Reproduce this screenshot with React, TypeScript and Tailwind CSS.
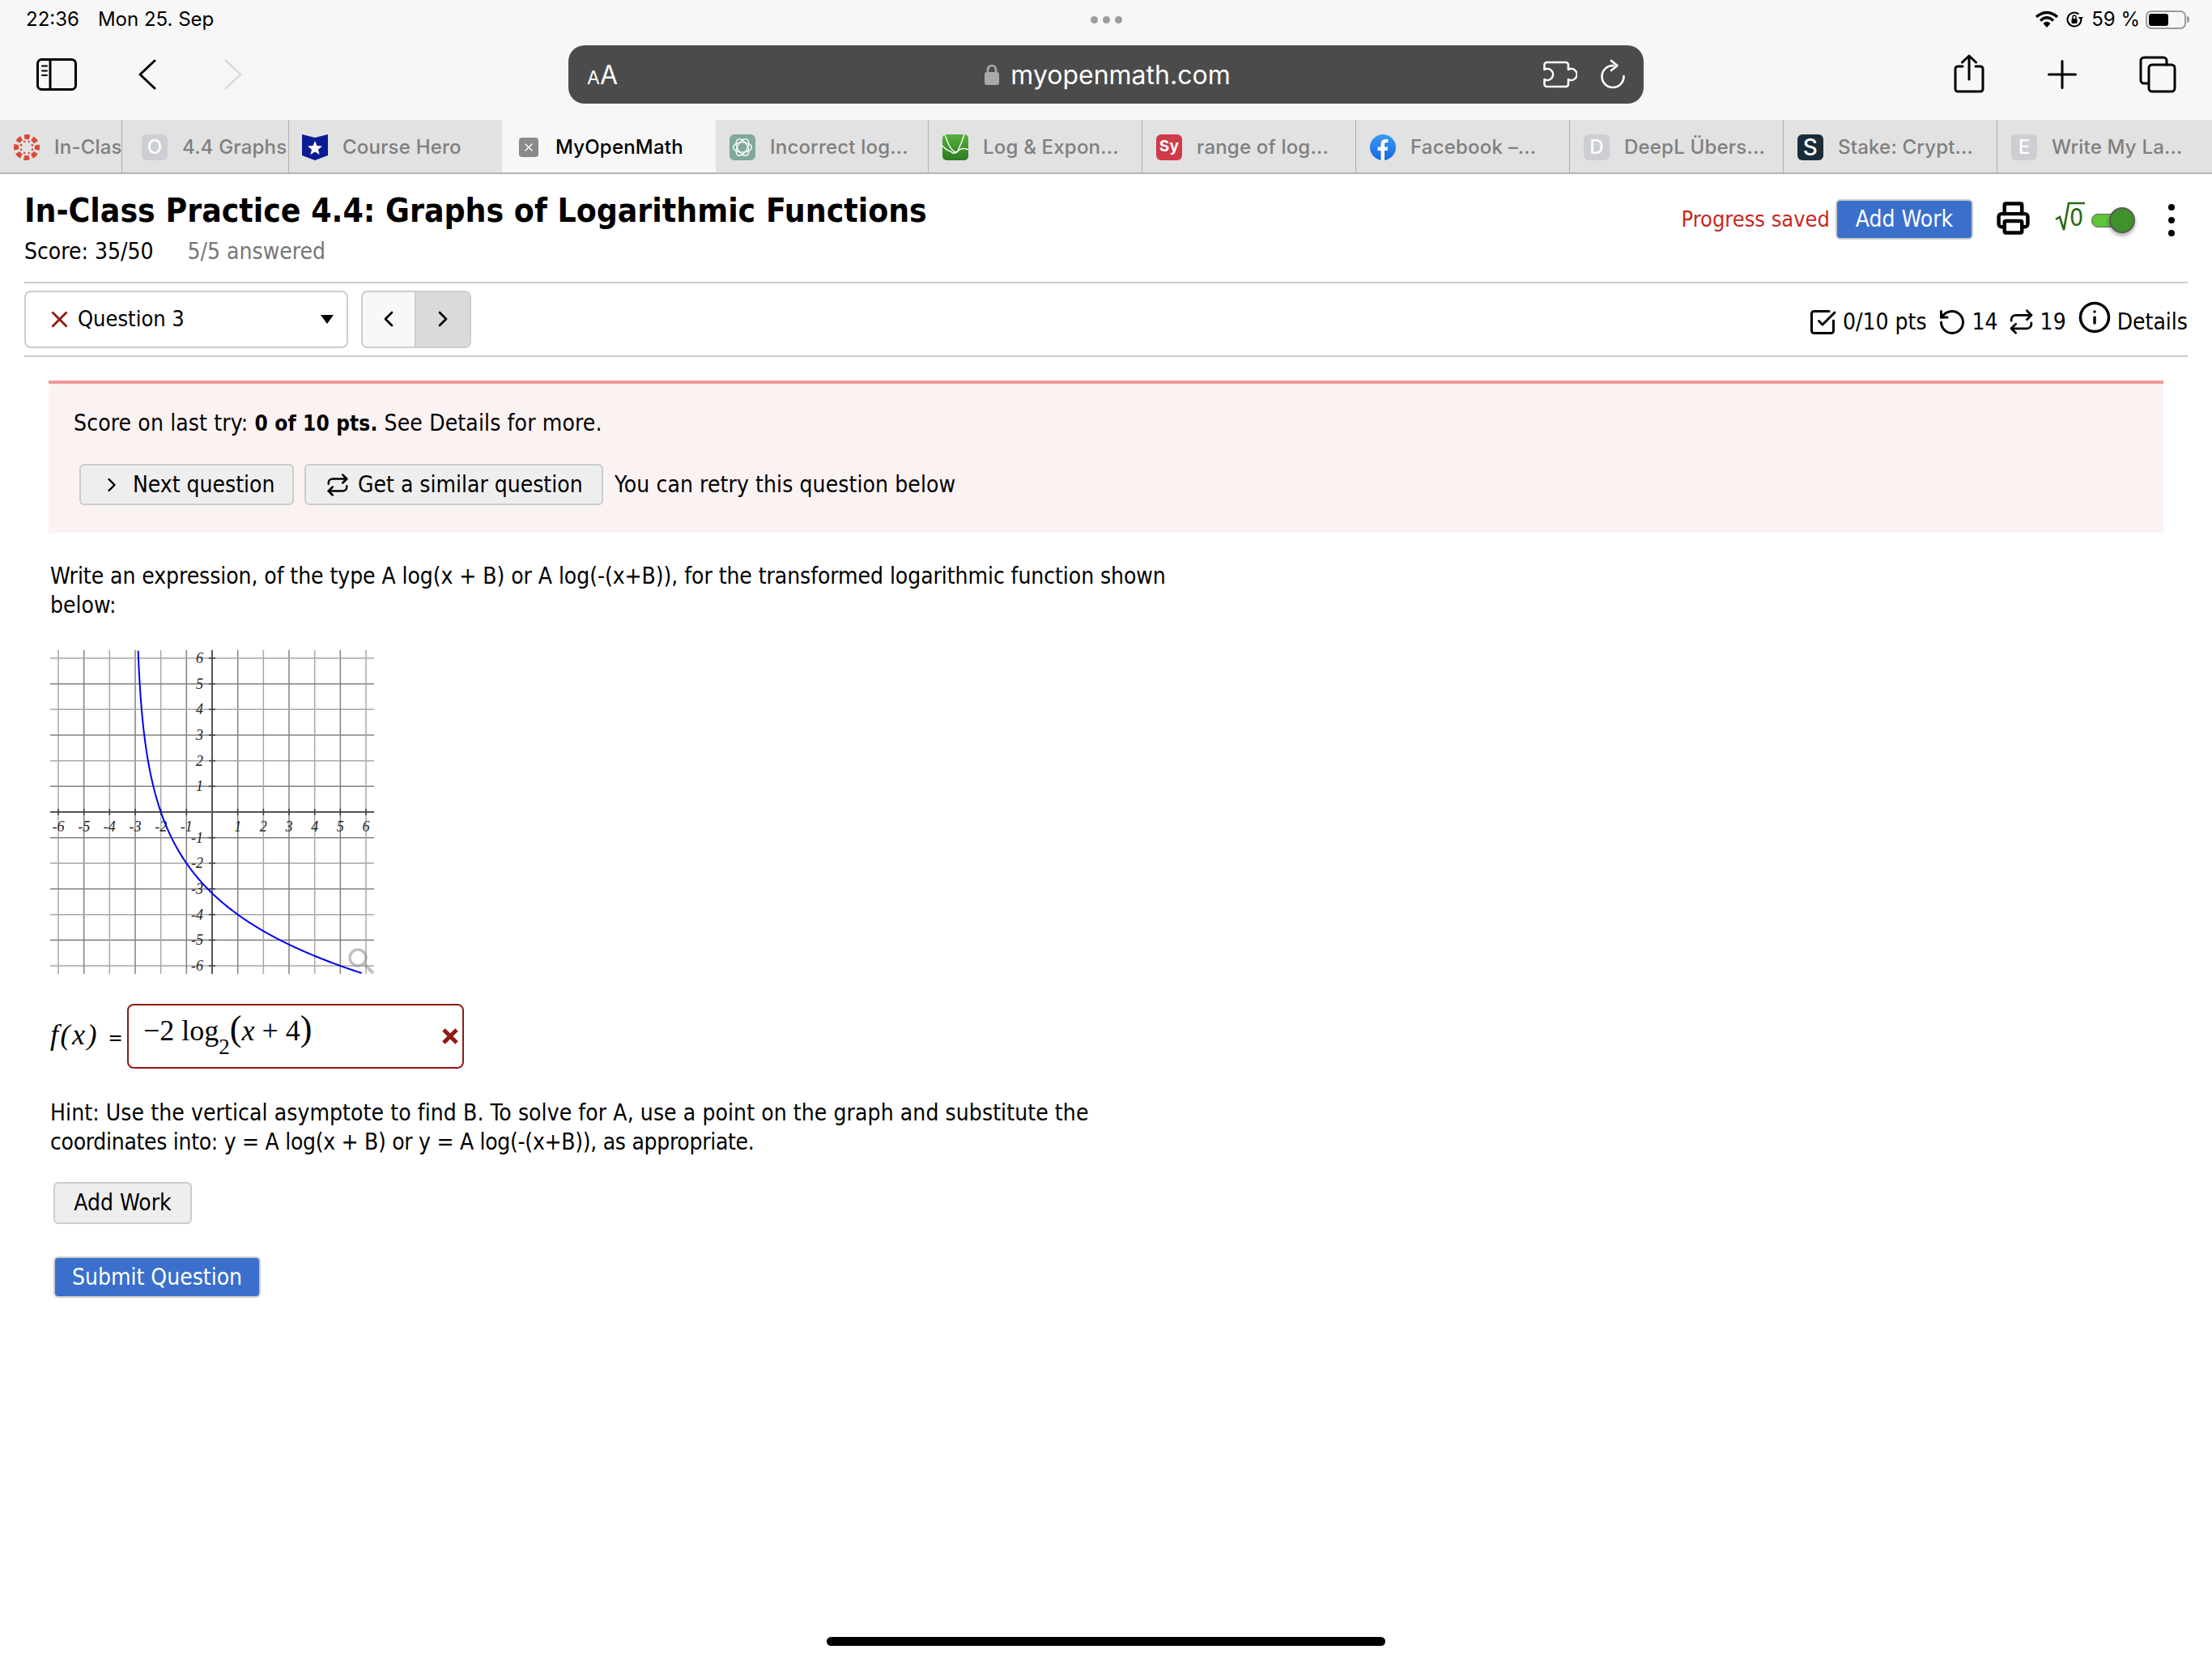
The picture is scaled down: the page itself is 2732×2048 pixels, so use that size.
import React from "react";
import { Printer, X, ChevronLeft, ChevronRight, Repeat, RotateCcw, SquareCheckBig, Info } from "lucide-react";

const sf = "font-['Inter','Liberation_Sans',sans-serif]";

function Tile({ bg, children, size = "w-8 h-8" }: { bg: string; children: React.ReactNode; size?: string }) {
  return <div className={`${size} rounded-[6px] flex items-center justify-center text-white font-medium text-[24px] shrink-0 ${bg}`}>{children}</div>;
}

function CanvasIcon() {
  const dots = Array.from({ length: 8 }, (_, i) => (i * Math.PI) / 4 + Math.PI / 8);
  return (
    <svg viewBox="0 0 32 32" className="w-8 h-8 shrink-0">
      <circle cx="16" cy="16" r="13" fill="none" stroke="#d94b3a" strokeWidth="6" strokeDasharray="6.6 3.6" strokeDashoffset="3.3" />
      {dots.map((a, i) => (
        <circle key={"b" + i} cx={16 + 7.5 * Math.cos(a)} cy={16 + 7.5 * Math.sin(a)} r="1.3" fill="#d94b3a" />
      ))}
    </svg>
  );
}
function HeroIcon() {
  return (
    <svg viewBox="0 0 32 32" className="w-8 h-8 shrink-0">
      <path d="M0 0 L16 4 L32 0 V26 L16 32 L0 26 Z" fill="#0a1c94" />
      <path d="M16 8 L18.5 14 L25 14.5 L20 18.7 L21.6 25 L16 21.6 L10.4 25 L12 18.7 L7 14.5 L13.5 14 Z" fill="#fff" />
    </svg>
  );
}
function GptIcon() {
  return (
    <Tile bg="bg-[#7fa99b]">
      <svg viewBox="0 0 32 32" className="w-7 h-7" fill="none" stroke="#fff" strokeWidth="1.5">
        {[0, 60, 120].map((r) => (
          <ellipse key={r} cx="16" cy="16" rx="13" ry="7" transform={`rotate(${r} 16 16)`} />
        ))}
      </svg>
    </Tile>
  );
}
function DesmosIcon() {
  return (
    <svg viewBox="0 0 32 32" className="w-8 h-8 shrink-0">
      <defs>
        <linearGradient id="dg" x1="0" y1="0" x2="0" y2="1">
          <stop offset="0" stopColor="#55b03c" />
          <stop offset="1" stopColor="#2e7a22" />
        </linearGradient>
      </defs>
      <rect width="32" height="32" rx="5" fill="url(#dg)" />
      <path d="M3 0 Q8 16 13 20 Q17 24 19 20 Q24 10 27 0" fill="none" stroke="#fff" strokeWidth="1.4" />
      <path d="M0 14 Q5 20 10 21 Q14 25 18 22 Q23 15 32 19" fill="none" stroke="#fff" strokeWidth="1.4" />
    </svg>
  );
}
function FbIcon() {
  return (
    <div className="w-8 h-8 shrink-0 rounded-full bg-gradient-to-b from-[#3b9bf5] to-[#1a66e0] flex items-end justify-center overflow-hidden">
      <svg viewBox="0 0 32 32" className="w-8 h-8"><path d="M13.5 32 V20 H9.5 V15.5 H13.5 V12 C13.5 8 16 6 19.4 6 C21 6 22.4 6.2 22.4 6.2 V10 H20.5 C18.6 10 18 11.2 18 12.4 V15.5 H22.2 L21.5 20 H18 V32 Z" fill="#fff" /></svg>
    </div>
  );
}

const tabs: { w: string; label: string; pl: string; icon: React.ReactNode }[] = [
  { w: "w-[151px]", pl: "pl-[17px]", label: "In-Clas", icon: <CanvasIcon /> },
  { w: "w-[206px]", pl: "pl-[24px]", label: "4.4 Graphs", icon: <Tile bg="bg-[#cdced3]">O</Tile> },
  { w: "w-[263px]", pl: "pl-[16px]", label: "Course Hero", icon: <HeroIcon /> },
  { w: "w-[264px]", pl: "pl-[21px]", label: "MyOpenMath", icon: null },
  { w: "w-[263px]", pl: "pl-[17px]", label: "Incorrect log...", icon: <GptIcon /> },
  { w: "w-[264px]", pl: "pl-[17px]", label: "Log & Expon...", icon: <DesmosIcon /> },
  { w: "w-[264px]", pl: "pl-[17px]", label: "range of log...", icon: <Tile bg="bg-[#d03a4a]"><span className="text-[19px] font-bold">Sy</span></Tile> },
  { w: "w-[264px]", pl: "pl-[17px]", label: "Facebook –...", icon: <FbIcon /> },
  { w: "w-[264px]", pl: "pl-[17px]", label: "DeepL Übers...", icon: <Tile bg="bg-[#cdced3]">D</Tile> },
  { w: "w-[264px]", pl: "pl-[17px]", label: "Stake: Crypt...", icon: <Tile bg="bg-[#1a2c38]"><span className="text-[28px]">S</span></Tile> },
  { w: "w-[265px]", pl: "pl-[17px]", label: "Write My La...", icon: <Tile bg="bg-[#cdced3]">E</Tile> },
];

function TabBar() {
  return (
    <div className={`flex h-[67px] border-b-2 border-[#b4b4b4] ${sf}`}>
      {tabs.map((t, i) => {
        const active = i === 3;
        return (
          <div
            key={t.label}
            className={`${t.w} ${t.pl} shrink-0 h-full pt-[2px] flex items-center overflow-hidden whitespace-nowrap text-[24px] font-medium tracking-[0.2px] ${
              active ? "bg-[#f7f7f7] text-black gap-[21px]" : "bg-[#e2e2e2] text-[#7f7f7f] gap-[18px]"
            } ${i !== 2 && i !== 3 && i !== 10 ? "border-r border-[#b0b0b0]" : ""}`}
          >
            {active ? (
              <div className="w-6 h-6 rounded-[4px] bg-[#8a8a8a] text-white flex items-center justify-center shrink-0">
                <X size={16} strokeWidth={2} />
              </div>
            ) : (
              t.icon
            )}
            <span>{t.label}</span>
          </div>
        );
      })}
    </div>
  );
}

function StatusBar() {
  return (
    <div className={`h-[48px] flex items-center justify-between pl-[32px] pr-[32px] text-[24px] text-black ${sf}`}>
      <div className="flex gap-[23px] w-[400px]">
        <span>22:36</span>
        <span>Mon 25. Sep</span>
      </div>
      <div className="flex gap-[6px]">
        <span className="w-[9px] h-[9px] rounded-full bg-[#9c9c9c]" />
        <span className="w-[9px] h-[9px] rounded-full bg-[#9c9c9c]" />
        <span className="w-[9px] h-[9px] rounded-full bg-[#9c9c9c]" />
      </div>
      <div className="flex items-center justify-end w-[400px]">
        <svg viewBox="0 0 28 22" className="w-[28px] h-[22px] mr-[9px]">
          <path d="M1 8 Q14 -3 27 8" fill="none" stroke="#000" strokeWidth="3.4" />
          <path d="M6 12.5 Q14 5 22 12.5" fill="none" stroke="#000" strokeWidth="3.4" />
          <path d="M9.5 16 Q14 11.5 18.5 16 L14 21 Z" fill="#000" />
        </svg>
        <svg viewBox="0 0 22 22" className="w-[22px] h-[22px] mr-[10px]">
          <path d="M19.5 11 A 8.5 8.5 0 1 1 16.5 4.5" fill="none" stroke="#000" strokeWidth="2" />
          <path d="M15.5 8 L22 8 L19 12 Z" fill="#000" />
          <rect x="7.5" y="10" width="7" height="6" rx="1" fill="#000" />
          <path d="M9 10 V8 a2 2 0 0 1 4 0 V10" fill="none" stroke="#000" strokeWidth="1.4" />
        </svg>
        <span className="mr-[7px]">59 %</span>
        <div className="relative w-[50px] h-[23px] rounded-[7px] border-2 border-[#9a9a9a] p-[2px]">
          <div className="h-full w-[24px] rounded-[3px] bg-black" />
          <div className="absolute -right-[6px] top-[5px] w-[3px] h-[8px] rounded-r bg-[#9a9a9a]" />
        </div>
      </div>
    </div>
  );
}

const iconStroke = { fill: "none", stroke: "#000", strokeWidth: 3, strokeLinecap: "round", strokeLinejoin: "round" } as const;

function ToolBar() {
  return (
    <div className="h-[100px] pt-[8px] flex items-start">
      <div className="w-[702px] h-[72px] flex items-center pl-[45px] shrink-0">
        <svg viewBox="0 0 50 40" className="w-[50px] h-[40px]" {...iconStroke}>
          <rect x="1.5" y="1.5" width="47" height="37" rx="5" />
          <path d="M17 2 V38" />
          <path d="M7 9.5 H13 M7 15.5 H13 M7 21 H13" strokeWidth="2" />
        </svg>
        <svg viewBox="0 0 24 38" className="w-[24px] h-[38px] ml-[75px]" {...iconStroke}>
          <path d="M21 2 L3 19 L21 36" />
        </svg>
        <svg viewBox="0 0 24 38" className="w-[24px] h-[38px] ml-[82px]" {...iconStroke} stroke="#dcdcdc">
          <path d="M3 2 L21 19 L3 36" />
        </svg>
      </div>
      <div className={`w-[1328px] h-[72px] rounded-[20px] bg-[#4b4b4b] flex items-center px-[23px] text-white shrink-0 ${sf}`}>
        <div className="flex-1 flex items-baseline font-normal pt-[2px]">
          <span className="text-[23px]">A</span>
          <span className="text-[32px]">A</span>
        </div>
        <div className="flex items-center gap-[14px] ml-[4px]">
          <svg viewBox="0 0 18 26" className="w-[18px] h-[26px]">
            <rect x="0" y="10" width="18" height="16" rx="3" fill="#a9a9ad" />
            <path d="M4 11 V7 a5 5 0 0 1 10 0 V11" fill="none" stroke="#a9a9ad" strokeWidth="2.6" />
          </svg>
          <span className="text-[32px] pt-[2px]">myopenmath.com</span>
        </div>
        <div className="flex-1 flex items-center justify-end">
          <svg viewBox="0 0 42 34" className="w-[42px] h-[34px]" fill="none" stroke="#fff" strokeWidth="2.6" strokeLinecap="round" strokeLinejoin="round">
            <path d="M1.5 5 a3 3 0 0 1 3 -3 H28 a3 3 0 0 1 3 3 V11 a7 7 0 1 1 0 12 V29 a3 3 0 0 1 -3 3 H4.5 a3 3 0 0 1 -3 -3 V23 a7 7 0 1 0 0 -12 Z" />
          </svg>
          <svg viewBox="0 0 32 38" className="w-[32px] h-[38px] ml-[28px] mr-[-1px]" fill="none" stroke="#fff" strokeWidth="2.6" strokeLinecap="round" strokeLinejoin="round">
            <path d="M17 8 A 13.5 13.5 0 1 0 29.5 21" />
            <path d="M14 2 L21.5 8 L14 14" />
          </svg>
        </div>
      </div>
      <div className="flex-1 h-[72px] flex items-center pl-[383px]">
        <svg viewBox="0 0 38 48" className="w-[38px] h-[48px] -mt-[2px]" {...iconStroke}>
          <path d="M11 15 H5 a3 3 0 0 0 -3 3 V43 a3 3 0 0 0 3 3 H33 a3 3 0 0 0 3 -3 V18 a3 3 0 0 0 -3 -3 H27" />
          <path d="M19 31 V2 M10.5 10 L19 2 L27.5 10" />
        </svg>
        <svg viewBox="0 0 36 36" className="w-[36px] h-[36px] ml-[78px]" {...iconStroke}>
          <path d="M18 1.5 V34.5 M1.5 18 H34.5" />
        </svg>
        <svg viewBox="0 0 46 46" className="w-[46px] h-[46px] ml-[77px]" {...iconStroke}>
          <path d="M11 34 H6 a4 4 0 0 1 -4 -4 V6 a4 4 0 0 1 4 -4 H30 a4 4 0 0 1 4 4 V11" />
          <rect x="12" y="11" width="32" height="33" rx="4" />
        </svg>
      </div>
    </div>
  );
}

function Graph() {
  const u = 31.667;
  const cx = 200;
  const cy = 200;
  const vals = [-6, -5, -4, -3, -2, -1, 1, 2, 3, 4, 5, 6];
  const pts: string[] = [];
  for (let px = -2.887; px <= 5.85; px += 0.02) {
    const py = -2 * Math.log2(px + 3);
    pts.push(`${(cx + px * u).toFixed(2)},${(cy - py * u).toFixed(2)}`);
  }
  return (
    <svg viewBox="0 0 400 400" className="w-[400px] h-[400px] block">
      {vals.map((v) => (
        <g key={v} stroke={Math.abs(v) % 2 ? "#808080" : "#a8a8a8"} strokeWidth="1.5">
          <line x1={cx + v * u} y1="0" x2={cx + v * u} y2="400" />
          <line y1={cy - v * u} x1="0" y2={cy - v * u} x2="400" />
        </g>
      ))}
      <line x1={cx} y1="0" x2={cx} y2="400" stroke="#555" strokeWidth="2" />
      <line y1={cy} x1="0" y2={cy} x2="400" stroke="#555" strokeWidth="2" />
      {vals.map((v) => (
        <g key={"t" + v} stroke="#444" strokeWidth="1.6">
          <line x1={cx + v * u} y1={cy - 4} x2={cx + v * u} y2={cy + 4} />
          <line y1={cy - v * u} x1={cx - 4} y2={cy - v * u} x2={cx + 4} />
        </g>
      ))}
      <g className="font-['Liberation_Serif',serif] italic text-[18px]" fill="#222">
        {vals.map((v) => (
          <text key={"x" + v} x={cx + v * u} y={cy + 24} textAnchor="middle">{v}</text>
        ))}
        {vals.map((v) => (
          <text key={"y" + v} x={cx - 11} y={cy - v * u + 6} textAnchor="end">{v}</text>
        ))}
      </g>
      <polyline points={pts.join(" ")} fill="none" stroke="#0000ee" strokeWidth="2" />
      <g fill="none" stroke="#8f8f8f" opacity="0.55">
        <circle cx="380" cy="380" r="10" strokeWidth="3.5" />
        <line x1="388" y1="388" x2="399" y2="399" strokeWidth="4" />
      </g>
    </svg>
  );
}

const btn = "rounded-[6px] border-2 border-[#cccccc] flex items-center";

export default function App() {
  return (
    <div className="relative w-[2732px] h-[2048px] bg-white overflow-hidden font-['DejaVu_Sans','Noto_Sans',sans-serif] [font-stretch:condensed] text-black">
      <div className="bg-[#f7f7f7] h-[148px]">
        <StatusBar />
        <ToolBar />
      </div>
      <TabBar />

      <div className="px-[30px]">
        <div className="flex justify-between h-[135px] border-b-2 border-[#cccccc]">
          <div>
            <h1 className="text-[40.5px] leading-[50px] font-bold mt-[20px]">In-Class Practice 4.4: Graphs of Logarithmic Functions</h1>
            <div className="flex gap-[42px] text-[28px] leading-[34px] mt-[9px]">
              <span>Score: 35/50</span>
              <span className="text-[#777]">5/5 answered</span>
            </div>
          </div>
          <div className="flex items-start pt-[31px] pr-[16px]">
            <span className="text-[27px] leading-[50px] text-[#c8281e] mr-[7px]">Progress saved</span>
            <div className={`${btn} w-[170px] h-[50px] bg-[#3a70cc] text-white text-[28px] justify-center`}>Add Work</div>
            <Printer size={43} strokeWidth={2.5} className="ml-[28px] mt-[2px] mr-[1px]" />
            <div className="relative w-[38px] h-[38px] ml-[29px] mt-[3px] text-[#2a6a17]">
              <svg viewBox="0 0 38 38" className="absolute inset-0 w-full h-full" fill="none" stroke="#2a6a17" strokeWidth="2.6">
                <path d="M1 22 L6 19 L11 35 L17 2 H37" />
              </svg>
              <span className="absolute left-[18px] top-[3px] text-[30px] leading-[34px]">0</span>
            </div>
            <div className="relative w-[54px] h-[33px] ml-[7px] mt-[10px]">
              <div className="absolute left-0 top-[8px] w-[40px] h-[17px] rounded-[8px] bg-[#5ec43a] border border-[#666]" />
              <div className="absolute right-0 top-0 w-[32px] h-[32px] rounded-full bg-[#3f9129] border-2 border-[#5a5a5a] shadow-[0_3px_5px_rgba(0,0,0,0.35)]" />
            </div>
            <div className="flex flex-col gap-[8px] ml-[41px] mt-[6px]">
              <span className="w-[8px] h-[8px] rounded-full bg-black" />
              <span className="w-[8px] h-[8px] rounded-full bg-black" />
              <span className="w-[8px] h-[8px] rounded-full bg-black" />
            </div>
          </div>
        </div>

        <div className="flex justify-between items-center h-[91px] border-b-2 border-[#cccccc]">
          <div className="flex items-center gap-[16px] -mt-[1px]">
            <div className="w-[400px] h-[71px] rounded-[8px] border-2 border-[#cccccc] flex items-center pl-[25px] pr-[16px]">
              <X size={33} strokeWidth={2} className="text-[#8f1b12] mr-[6px]" />
              <span className="text-[27px] flex-1">Question 3</span>
              <span className="w-0 h-0 border-x-[8px] border-x-transparent border-t-[11px] border-t-black" />
            </div>
            <div className="flex w-[136px] h-[71px] rounded-[8px] border-2 border-[#cccccc] overflow-hidden">
              <div className="w-[66px] bg-[#f8f8f8] border-r-2 border-[#cccccc] flex items-center justify-center"><ChevronLeft size={32} strokeWidth={2} /></div>
              <div className="flex-1 bg-[#dadada] flex items-center justify-center"><ChevronRight size={32} strokeWidth={2} /></div>
            </div>
          </div>
          <div className="flex items-center text-[28px] mt-[6px]">
            <SquareCheckBig size={36} strokeWidth={2} className="mr-[7px]" />
            <span>0/10 pts</span>
            <RotateCcw size={36} strokeWidth={2} className="ml-[13px] mr-[7px]" />
            <span>14</span>
            <Repeat size={33} strokeWidth={2} className="ml-[12px] mr-[7px]" />
            <span>19</span>
            <Info size={42} strokeWidth={2} className="ml-[14px] mr-[7px] -mt-[12px]" />
            <span>Details</span>
          </div>
        </div>

        <div className="mx-[30px] mt-[29px] h-[188px] bg-[#fbf2f2] border-t-4 border-[#ef9a9a] pl-[31px] pt-[31px]">
          <div className="text-[28px] leading-[36px] tracking-[0.14px]">Score on last try: <b className="text-[26px]">0 of 10 pts.</b> See Details for more.</div>
          <div className="flex items-center mt-[32px] ml-[7px] text-[28px]">
            <div className={`${btn} w-[265px] h-[51px] bg-[#eeeeee] pl-[24px] gap-[12px]`}><ChevronRight size={28} strokeWidth={2} />Next question</div>
            <div className={`${btn} w-[369px] h-[51px] bg-[#eeeeee] ml-[13px] pl-[24px] gap-[10px]`}><Repeat size={30} strokeWidth={2} />Get a similar question</div>
            <span className="ml-[14px] tracking-[0.1px]">You can retry this question below</span>
          </div>
        </div>

        <div className="pl-[32px]">
          <p className="mt-[36px] w-[1400px] text-[28px] leading-[36px]">
            <span className="block tracking-[-0.06px]">Write an expression, of the type A log(x + B) or A log(-(x+B)), for the transformed logarithmic function shown</span>
            <span className="block">below:</span>
          </p>
          <div className="mt-[37px]"><Graph /></div>

          <div className="flex items-center mt-[37px] h-[80px]">
            <span className="font-['Liberation_Serif',serif] text-[36px] italic tracking-[2.5px] w-[95px] whitespace-nowrap -mt-[5px]">f(x) <span className="not-italic text-[24px] font-['DejaVu_Sans',sans-serif] tracking-normal">=</span></span>
            <div className="w-[416px] h-[80px] rounded-[8px] border-2 border-[#8f1b12] flex items-start pl-[18px] pr-[6px] pt-[1px] font-['Liberation_Serif',serif] text-[36px] leading-[60px] whitespace-nowrap relative">
              <span>−2 log<sub className="text-[27px] align-[-10px] leading-[0]">2</sub><span className="text-[44px] leading-[0] font-light">(</span><i>x</i> + 4<span className="text-[44px] leading-[0] font-light">)</span></span>
              <svg viewBox="0 0 20 20" className="absolute right-[5px] top-[28px] w-[20px] h-[20px]"><path d="M2 2 L18 18 M18 2 L2 18" stroke="#8f1b12" strokeWidth="5" /></svg>
            </div>
          </div>

          <p className="mt-[37px] w-[1400px] text-[28px] leading-[36px]">
            <span className="block tracking-[0.09px]">Hint: Use the vertical asymptote to find B. To solve for A, use a point on the graph and substitute the</span>
            <span className="block tracking-[-0.3px]">coordinates into: y = A log(x + B) or y = A log(-(x+B)), as appropriate.</span>
          </p>

          <div className={`${btn} mt-[31px] ml-[4px] w-[171px] h-[52px] bg-[#eeeeee] text-[28px] justify-center`}>Add Work</div>
          <div className={`${btn} mt-[40px] ml-[4px] w-[256px] h-[51px] bg-[#3a70cc] text-white text-[28px] justify-center`}>Submit Question</div>
        </div>
      </div>

      <div className="absolute left-[1021px] top-[2022px] w-[690px] h-[11px] rounded-full bg-black" />
    </div>
  );
}
